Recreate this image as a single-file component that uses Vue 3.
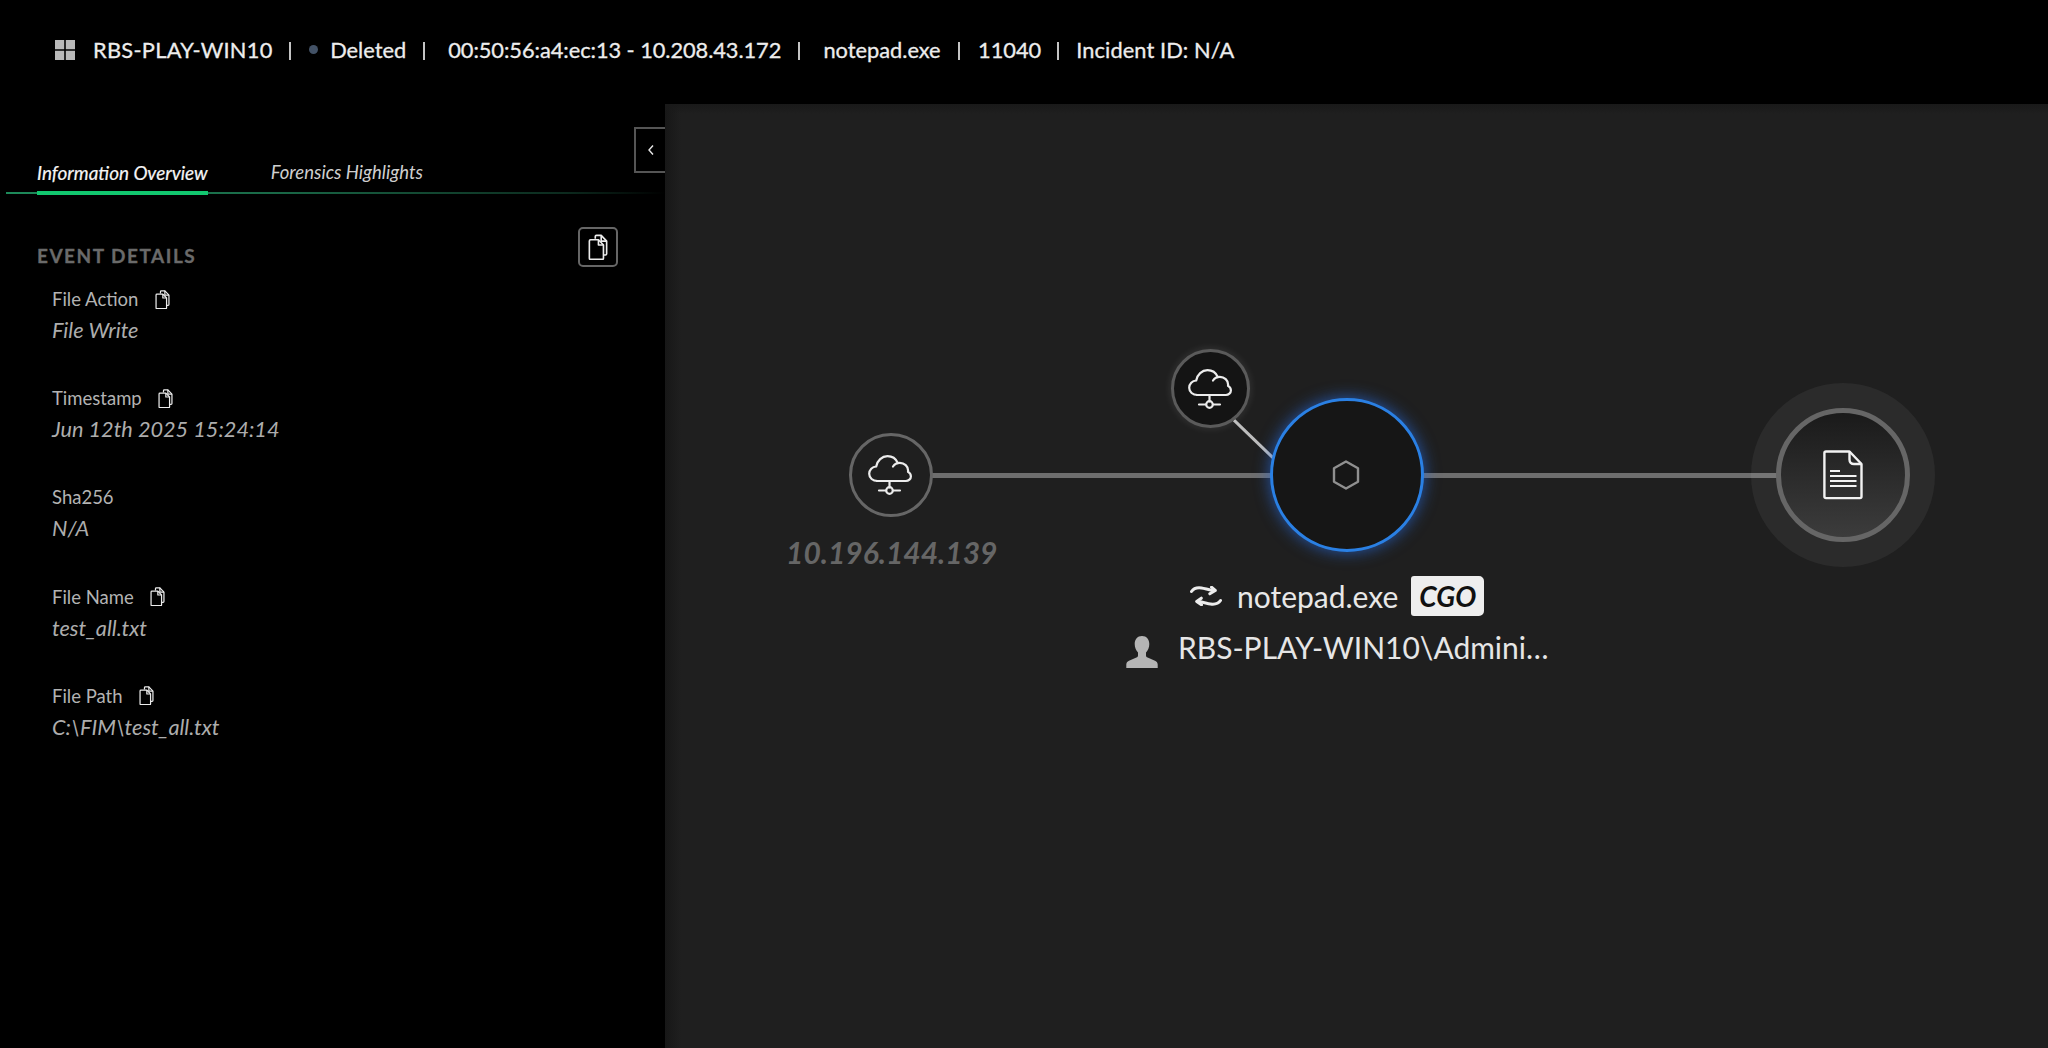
<template>
  <div class="page">
    <header class="topbar">
      <svg class="win-icon" viewBox="0 0 20 20"><path d="M0 0h9.2v9.2H0zM10.8 0H20v9.2h-9.2zM0 10.8h9.2V20H0zM10.8 10.8H20V20h-9.2z" fill="#b9b9b9" /></svg>
      <span class="host">RBS-PLAY-WIN10</span>
      <span class="sep sep-a"></span>
      <span class="dot"></span>
      <span class="status">Deleted</span>
      <span class="sep sep-b"></span>
      <span class="mac">00:50:56:a4:ec:13 - 10.208.43.172</span>
      <span class="sep sep-b"></span>
      <span class="proc">notepad.exe</span>
      <span class="sep"></span>
      <span class="pid">11040</span>
      <span class="sep sep-a sep-d"></span>
      <span class="incident">Incident ID: N/A</span>
    </header>

    <div class="main">
      <aside class="side">
        <button class="collapse">
          <svg viewBox="0 0 8 12" width="8" height="12"><path d="M6 1.500 2 6l4 4.500" fill="none" stroke="#e8e8e8" stroke-width="1.400" /></svg>
        </button>
        <nav class="tabs">
          <span class="tab active">Information Overview</span>
          <span class="tab">Forensics Highlights</span>
        </nav>
        <div class="details">
          <div class="details-head">
            <h2>EVENT DETAILS</h2>
            <button class="copy-all">
              <svg viewBox="0 0 22 28" width="20" height="26"><path v-bind="copyBack" /><path v-bind="copyFront" /><path v-bind="copyFold" /></svg>
            </button>
          </div>
          <div v-for="f in fields" :key="f.label" class="field">
            <div class="field-label">
              {{ f.label }}
              <svg v-if="f.copy" viewBox="0 0 22 28" width="15" height="19"><path v-bind="copyBack" /><path v-bind="copyFront" /><path v-bind="copyFold" /></svg>
            </div>
            <div class="field-value">{{ f.value }}</div>
          </div>
        </div>
      </aside>

      <section class="canvas">
        <div class="edge edge-left"></div>
        <div class="edge edge-top"></div>
        <div class="link link-left"></div>
        <div class="link link-right"></div>
        <div class="link-thin"></div>

        <div class="node node-ip">
          <svg class="nudge" viewBox="0 0 44 40" width="44" height="40"><use href="#cloud" /></svg>
        </div>
        <div class="ip-label">10.196.144.139</div>

        <div class="node node-ext">
          <svg class="nudge" viewBox="0 0 44 40" width="44" height="40">
            <g id="cloud" fill="none" stroke="#ececec" stroke-width="2.200" stroke-linecap="round" stroke-linejoin="round">
              <path d="M11 26H9.500C4.800 26 1.200 23 1.200 18.800c0-3.900 3.100-7 7-7.300C9.200 5.400 14 1.200 19.500 1.200c4.700 0 8.500 2.800 10.300 6.800" />
              <path d="M25 11.500c1.500-2.300 4-3.700 6.800-3.700 4.700 0 8.300 3.500 8.300 7.700 0 .6 0 .9-.1 1.400 2 1.100 2.900 2.600 2.900 4.500 0 2.500-2.300 4.600-5 4.600H9" />
              <path d="M21.500 26v6.500" />
              <circle cx="21.500" cy="35.500" r="3.300" />
              <path d="M11 35.500h7M25 35.500h7" />
            </g>
          </svg>
        </div>

        <div class="node node-proc">
          <svg class="nudge" viewBox="0 0 30 32" width="30" height="32"><path d="M15 2.500 27 9.300v13.400L15 29.500 3 22.700V9.300z" fill="none" stroke="#8f8f8f" stroke-width="2.400" stroke-linejoin="round" /></svg>
        </div>

        <div class="proc-label">
          <svg class="sync" viewBox="0 0 32 20" width="32" height="20" fill="none" stroke="#ececec" stroke-width="3" stroke-linecap="round" stroke-linejoin="round">
            <path d="M1.500 5.500C4 1.800 8 1.500 11.500 2c3.500.5 7.500 2 12 2.500" />
            <path d="M21.500 1.200 25.300 4.500 19.800 7.800" />
            <path d="M30.500 14.500C28 18.200 24 18.500 20.500 18c-3.500-.5-7.500-2-12-2.500" />
            <path d="M11.300 12.200 6.700 15.500 11.500 18.800" />
          </svg>
          <span class="proc-name">notepad.exe</span>
          <span class="badge">CGO</span>
        </div>
        <div class="user-label">
          <svg class="user" viewBox="0 0 32 32" width="32" height="32">
            <path d="M16 0c4.600 0 7.300 3.400 7.300 8 0 3.400-1.300 6.600-3.300 8.500v3c0 1 .6 1.700 1.600 2.100l7.400 3.100c1.800.8 2.700 2.100 2.700 3.900V32H.3v-3.400c0-1.800.9-3.100 2.700-3.900l7.400-3.100c1-.4 1.600-1.100 1.600-2.100v-3C10 14.600 8.700 11.400 8.700 8 8.700 3.400 11.400 0 16 0z" fill="#b5b5b5" />
          </svg>
          <span class="user-name">RBS-PLAY-WIN10\Admini…</span>
        </div>

        <div class="halo"></div>
        <div class="node node-file">
          <svg viewBox="0 0 40 50" width="40" height="50" fill="none" stroke="#f2f2f2" stroke-width="2.400">
            <path d="M3 1.500h23.500L38.500 14v32.500c0 1-.6 1.600-1.500 1.600H3c-1 0-1.600-.6-1.600-1.600V3c0-1 .6-1.500 1.600-1.500z" stroke-linejoin="round" />
            <path d="M26.500 1.500v8c0 2.800 1.700 4.500 4.500 4.500h7.500" stroke-linejoin="round" />
            <path d="M7 21h10M7 26h26.500M7 31h26.500M7 36h26.500" stroke-width="2" />
          </svg>
        </div>
      </section>
    </div>
  </div>
</template>

<script setup>
const copyBack = { d: 'M8 5V2.500c0-.8.5-1.300 1.300-1.300h5.200l6 6.300v14c0 .8-.5 1.300-1.300 1.300H17', fill: 'none', stroke: '#ececec', 'stroke-width': 1.8, 'stroke-linejoin': 'round' }
const copyFront = { d: 'M2.800 6h8.700l5.500 5.800v14.500c0 .8-.5 1.300-1.300 1.300H2.800c-.8 0-1.300-.5-1.300-1.300V7.300c0-.8.5-1.300 1.300-1.300z', fill: 'none', stroke: '#ececec', 'stroke-width': 1.8, 'stroke-linejoin': 'round' }
const copyFold = { d: 'M11.500 6v5.800H17M14.500 1.200v6.300h6', fill: 'none', stroke: '#ececec', 'stroke-width': 1.8, 'stroke-linejoin': 'round' }

const fields = [
  { label: 'File Action', value: 'File Write', copy: true },
  { label: 'Timestamp', value: 'Jun 12th 2025 15:24:14', copy: true },
  { label: 'Sha256', value: 'N/A', copy: false },
  { label: 'File Name', value: 'test_all.txt', copy: true },
  { label: 'File Path', value: 'C:\\FIM\\test_all.txt', copy: true },
]
</script>

<style>
html, body {
  margin: 0;
  background: #000;
}
</style>

<style scoped>
.page {
  width: 2048px;
  height: 1048px;
  overflow: hidden;
  background: #000;
  display: flex;
  flex-direction: column;
  font-family: Lato, "Liberation Sans", sans-serif;
}

.topbar {
  height: 104px;
  flex: none;
  box-sizing: border-box;
  padding: 0 0 6px 55px;
  display: flex;
  align-items: center;
  font-size: 21.8px;
  color: #ededed;
  -webkit-text-stroke: 0.3px #ededed;
  white-space: nowrap;
}

.win-icon {
  width: 20px;
  height: 20px;
  margin: 2px 18px 0 0;
}

.host { letter-spacing: 0.280px; }
.mac { letter-spacing: -0.055px; }
.incident { letter-spacing: 0.100px; }

.sep {
  width: 2px;
  height: 18px;
  background: #c4c4c4;
  margin: 4px 18px 0 17.400px;
}

.sep-a { margin-left: 16px; }
.sep-b { margin-left: 16.600px; margin-right: 23.500px; }
.sep-d { margin-right: 17px; }

.dot {
  width: 9px;
  height: 9px;
  border-radius: 50%;
  background: #435266;
  margin-right: 12.500px;
}

.main {
  flex: 1;
  display: flex;
  min-height: 0;
}

.side {
  width: 665px;
  flex: none;
  position: relative;
}

.collapse {
  position: absolute;
  top: 23px;
  right: 0;
  width: 31px;
  height: 46px;
  box-sizing: border-box;
  padding: 0;
  background: #000;
  border: 2px solid #555;
  border-right: 0;
  display: flex;
  align-items: center;
  justify-content: center;
}

.tabs {
  margin: 50px 0 0 6px;
  height: 40px;
  box-sizing: border-box;
  padding-left: 31px;
  display: flex;
  gap: 63px;
  background: linear-gradient(90deg, #1d8a5a 0%, #1a6a48 40%, #0c2a1e 85%, transparent 100%) left bottom / 100% 2px no-repeat;
}

.tab {
  font-size: 18.500px;
  font-style: italic;
  color: #cfcfcf;
  line-height: 37px;
  height: 40px;
  box-sizing: border-box;
  white-space: nowrap;
}

.tab.active {
  font-size: 18.900px;
  color: #f5f5f5;
  line-height: 36px;
  border-bottom: 4px solid #12c76f;
  position: relative;
  top: 1px;
  -webkit-text-stroke: 0.2px #f5f5f5;
}

.details {
  padding: 0 0 0 37px;
}

.details-head {
  display: flex;
  justify-content: space-between;
  align-items: flex-start;
  height: 60px;
  padding: 33px 47px 0 0;
}

.details-head h2 {
  margin: 17px 0 0;
  font-size: 19px;
  line-height: 24px;
  font-weight: 700;
  letter-spacing: 1.500px;
  color: #6a6a6a;
  -webkit-text-stroke: 0.3px #6a6a6a;
}

.copy-all {
  width: 40px;
  height: 40px;
  box-sizing: border-box;
  padding: 0;
  background: #000;
  border: 2px solid #666;
  border-radius: 5px;
  display: flex;
  align-items: center;
  justify-content: center;
}

.field {
  padding-left: 15px;
  height: 99.200px;
}

.field-label {
  display: flex;
  align-items: center;
  gap: 16.500px;
  font-size: 18.500px;
  line-height: 24px;
  color: #b3b3b3;
}

.field-value {
  margin-top: 6px;
  font-size: 21.700px;
  line-height: 26px;
  font-style: italic;
  color: #adadad;
}

.canvas {
  flex: 1;
  position: relative;
  background: #1f1f1f;
  overflow: hidden;
}

.edge {
  position: absolute;
  pointer-events: none;
}

.edge-left {
  left: 0;
  top: 0;
  bottom: 0;
  width: 16px;
  background: linear-gradient(90deg, #171717, transparent);
}

.edge-top {
  left: 0;
  right: 0;
  top: 0;
  height: 10px;
  background: linear-gradient(180deg, #191919, transparent);
}

.link {
  position: absolute;
  top: 369px;
  height: 5px;
  background: #6e6e6e;
}

.link-left {
  left: 265px;
  width: 345px;
}

.link-right {
  left: 755px;
  width: 360px;
}

.link-thin {
  position: absolute;
  left: 570px;
  top: 315px;
  width: 54px;
  height: 3px;
  background: #bdbdbd;
  transform: rotate(44deg);
  transform-origin: 0 0;
}

.node {
  position: absolute;
  box-sizing: border-box;
  border-radius: 50%;
  display: flex;
  align-items: center;
  justify-content: center;
}

.nudge {
  margin-left: -2px;
}

.node-ip {
  left: 184px;
  top: 329px;
  width: 84px;
  height: 84px;
  border: 3px solid #666;
}

.ip-label {
  position: absolute;
  left: 121px;
  top: 430px;
  font-size: 30px;
  line-height: 36px;
  font-weight: 700;
  font-style: italic;
  color: #666;
  white-space: nowrap;
}

.node-ext {
  left: 506px;
  top: 245px;
  width: 79px;
  height: 79px;
  background: #141414;
  border: 3px solid #5a5a5a;
  box-shadow: 0 0 8px rgba(255, 255, 255, 0.12);
}

.node-proc {
  left: 605px;
  top: 294px;
  width: 154px;
  height: 154px;
  background: #161616;
  border: 3.500px solid #2a80e4;
  box-shadow: 0 0 16px rgba(40, 110, 230, 0.7);
}

.proc-label {
  position: absolute;
  left: 525px;
  top: 472px;
  height: 40px;
  display: flex;
  align-items: center;
}

.sync {
  margin-right: 15px;
}

.proc-name {
  font-size: 30px;
  color: #e8e8e8;
  margin-right: 13px;
}

.badge {
  width: 73px;
  height: 40px;
  display: flex;
  align-items: center;
  justify-content: center;
  background: #eeeeee;
  border-radius: 3px 5px 5px 3px;
  color: #111;
  font-size: 28px;
  font-weight: 700;
  font-style: italic;
}

.user-label {
  position: absolute;
  left: 461px;
  top: 523px;
  height: 40px;
  display: flex;
  align-items: center;
}

.user {
  margin: 9px 20px 0 0;
}

.user-name {
  font-size: 30px;
  color: #e6e6e6;
  white-space: nowrap;
}

.halo {
  position: absolute;
  left: 1086px;
  top: 279px;
  width: 184px;
  height: 184px;
  border-radius: 50%;
  background: rgba(255, 255, 255, 0.055);
}

.node-file {
  left: 1111px;
  top: 304px;
  width: 134px;
  height: 134px;
  border: 5px solid #666;
  background: linear-gradient(180deg, #1a1a1a 0%, #3c3c3c 100%);
}
</style>
